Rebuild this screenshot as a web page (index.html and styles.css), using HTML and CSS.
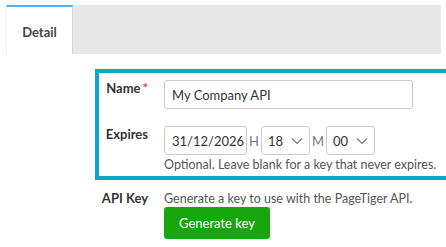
FILE: index.html
```html
<!DOCTYPE html>
<html lang="en">
<head>
    <meta charset="UTF-8">
    <title>API Key - Detail</title>
    <link rel="stylesheet" href="styles.css">
</head>
<body>

    <!-- Tabs -->
    <nav class="tabs">
        <div class="tab active">Detail</div>
    </nav>

    <section class="form">
        <!-- Highlighted fields -->
        <div class="highlight">
            <div class="row">
                <label class="label">Name<span class="req">*</span></label>
                <div class="field">
                    <div class="input name-input">My Company API</div>
                </div>
            </div>

            <div class="row expires-row">
                <label class="label">Expires</label>
                <div class="field">
                    <div class="time-line">
                        <div class="input date-input">31/12/2026</div>
                        <span class="unit">H</span>
                        <div class="input select">
                            <span>18</span>
                            <svg width="12" height="8" viewBox="0 0 12 8"><path d="M1 1.5 L6 6.5 L11 1.5" fill="none" stroke="#777" stroke-width="1.2"/></svg>
                        </div>
                        <span class="unit">M</span>
                        <div class="input select">
                            <span>00</span>
                            <svg width="12" height="8" viewBox="0 0 12 8"><path d="M1 1.5 L6 6.5 L11 1.5" fill="none" stroke="#777" stroke-width="1.2"/></svg>
                        </div>
                    </div>
                    <p class="help">Optional. Leave blank for a key that never expires.</p>
                </div>
            </div>
        </div>

        <!-- API key -->
        <div class="row api-row">
            <label class="label">API Key</label>
            <div class="field">
                <p class="desc">Generate a key to use with the PageTiger API.</p>
                <button class="button">Generate key</button>
            </div>
        </div>
    </section>

</body>
</html>
```

FILE: styles.css
```css
* {
    margin: 0;
    padding: 0;
    box-sizing: border-box;
}

body {
    font-family: Lato, "Open Sans", sans-serif;
    font-size: 13px;
    color: #333;
    background-color: #fff;
    width: 446px;
    overflow: hidden;
}

/* Tabs */
.tabs {
    display: flex;
    height: 49px;
    margin: 5px 5px 0 6px;
    background-color: #e8e8e8;
}

.tab {
    width: 67px;
    display: flex;
    align-items: center;
    justify-content: center;
    padding-top: 2px;
    font-size: 13px;
    font-weight: 700;
    color: #444;
    background-color: #fff;
    border-top: 2px solid #4fb3f6;
    border-left: 1px solid #eee;
    border-right: 1px solid #d4d4d4;
}

/* Form */
.form {
    padding-top: 15px;
}

.row {
    display: grid;
    grid-template-columns: 49px 1fr;
    column-gap: 16px;
}

.label {
    font-size: 13px;
    font-weight: 700;
    line-height: 13px;
    color: #333;
    text-align: right;
    white-space: nowrap;
    padding-top: 2px;
}

.req {
    color: #e0403a;
    margin-left: 2px;
}

.highlight {
    margin-left: 95px;
    border: 4px solid #0aa9cc;
    padding: 7px 0 1px 0;
    width: 355px;
}

.expires-row {
    margin-top: 17px;
}

.input {
    height: 29px;
    border: 1px solid #ccc;
    border-radius: 3px;
    padding: 0 7px;
    display: flex;
    align-items: center;
    font-size: 13px;
    color: #333;
    background-color: #fff;
    white-space: nowrap;
}

.name-input {
    width: 249px;
}

.time-line {
    display: flex;
    align-items: center;
}

.date-input {
    width: 83px;
}

.unit {
    color: #777;
    padding: 0 2px;
}

.select {
    width: 49px;
    padding: 0 6px;
    justify-content: space-between;
}

.help {
    font-size: 12.5px;
    line-height: 20px;
    color: #555;
    white-space: nowrap;
}

.api-row {
    margin-left: 99px;
    margin-top: 10px;
}

.api-row .label {
    padding-top: 2px;
}

.desc {
    font-size: 12.5px;
    line-height: 17px;
    color: #555;
    white-space: nowrap;
}

.button {
    width: 106px;
    height: 32px;
    border: none;
    border-radius: 3px;
    background-color: #17a60d;
    color: #fff;
    font-family: Lato, "Open Sans", sans-serif;
    font-size: 13px;
    cursor: pointer;
}
```
